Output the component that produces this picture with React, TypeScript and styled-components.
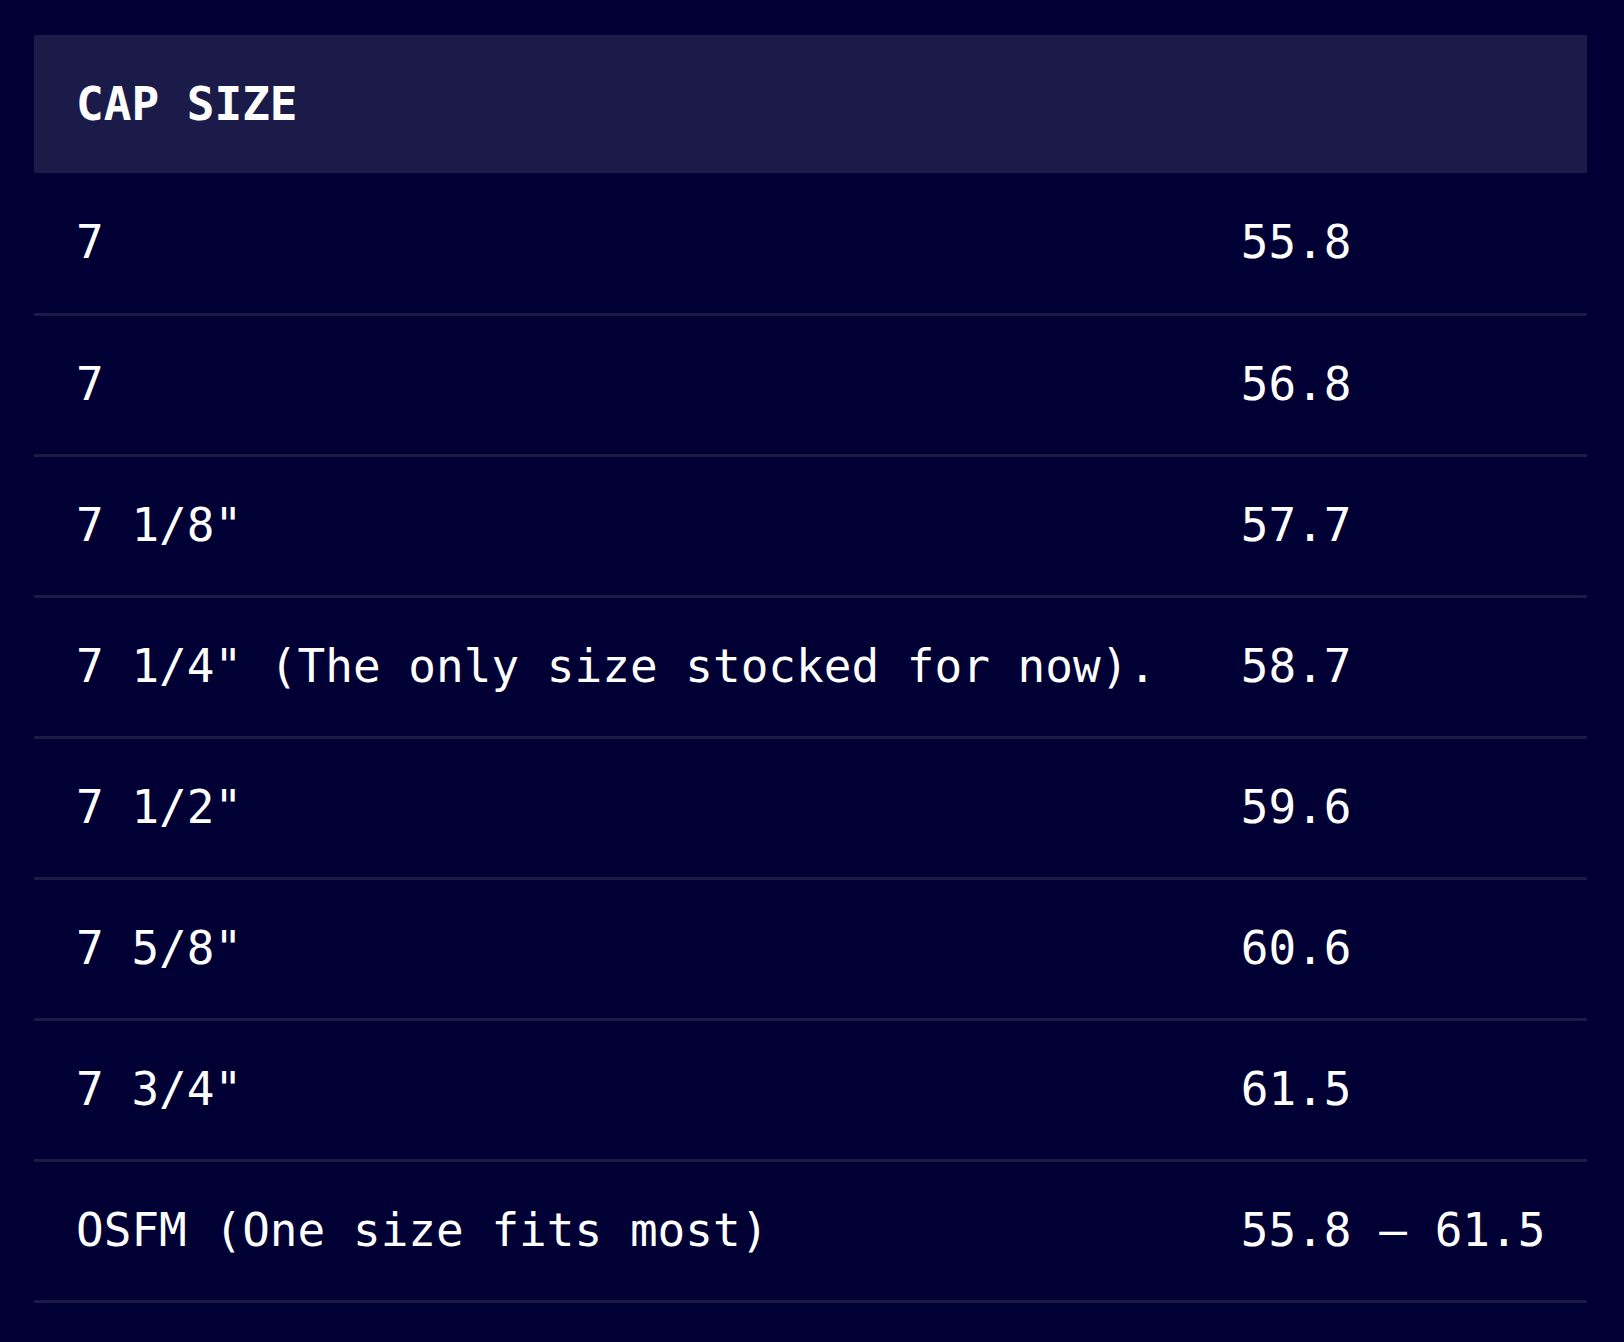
import styled, { createGlobalStyle } from "styled-components";

const GlobalStyle = createGlobalStyle`
  html, body {
    margin: 0;
    background-color: #000035;
  }
  body {
    padding: 35px 37px 39px 34px;
    font-family: "DejaVu Sans Mono", "Liberation Mono", monospace;
    color: #ffffff;
  }
`;

const SizeTable = styled.table`
  width: 100%;
  border-collapse: collapse;
  font-size: 46px;
`;

const HeadCell = styled.th`
  background-color: #1b1b4a;
  height: 138px;
  padding: 0 41px 1px 42px;
  text-align: left;
  font-weight: bold;
  line-height: 54px;
  box-sizing: border-box;
`;

const Row = styled.tr`
  border-bottom: 3px solid #1b1b48;
`;

const Cell = styled.td`
  height: 141px;
  padding: 0 41px 2px 42px;
  line-height: 54px;
  white-space: pre;
  box-sizing: border-box;
`;

const rows: [string, string][] = [
  ["7", "55.8"],
  ["7", "56.8"],
  ['7 1/8"', "57.7"],
  ['7 1/4" (The only size stocked for now).', "58.7"],
  ['7 1/2"', "59.6"],
  ['7 5/8"', "60.6"],
  ['7 3/4"', "61.5"],
  ["OSFM (One size fits most)", "55.8 – 61.5"],
];

export default function App() {
  return (
    <>
      <GlobalStyle />
      <SizeTable>
        <thead>
          <tr>
            <HeadCell>CAP SIZE</HeadCell>
            <HeadCell />
          </tr>
        </thead>
        <tbody>
          {rows.map(([size, cm], i) => (
            <Row key={i}>
              <Cell>{size}</Cell>
              <Cell>{cm}</Cell>
            </Row>
          ))}
        </tbody>
      </SizeTable>
    </>
  );
}
